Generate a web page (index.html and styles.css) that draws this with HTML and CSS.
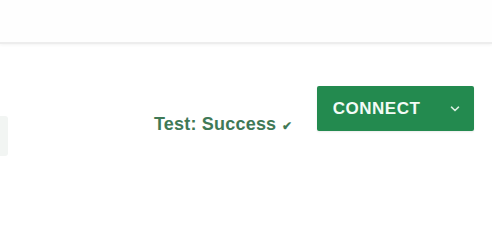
FILE: index.html
```html
<!DOCTYPE html>
<html>
<head>
<meta charset="utf-8">
<link rel="stylesheet" href="styles.css">
</head>
<body>
<div class="topbar"></div>
<div class="content">
  <div class="side-tab"></div>
  <div class="actions">
    <span class="status">Test: Success <span class="check">&#10004;</span></span>
    <button class="connect">
      <span class="label">CONNECT</span>
      <svg class="chev" width="10" height="6" viewBox="0 0 10 6"><path d="M1.5 1.2 L5 4.5 L8.5 1.2" fill="none" stroke="#d8eee0" stroke-width="1.6" stroke-linecap="round"/></svg>
    </button>
  </div>
</div>
</body>
</html>
```

FILE: styles.css
```css
html, body {
  margin: 0;
  padding: 0;
  background: #ffffff;
  font-family: "Liberation Sans", Arial, sans-serif;
}
.topbar {
  height: 42px;
  background: #fefefe;
  border-bottom: 2px solid #ededed;
  box-shadow: 0 1px 3px rgba(0,0,0,0.05);
}
.content {
  position: relative;
  display: flex;
  height: 187px;
}
.side-tab {
  position: absolute;
  left: 0;
  top: 72px;
  width: 8px;
  height: 40px;
  background: #f2f5f3;
  border-radius: 0 3px 3px 0;
}
.actions {
  display: flex;
  align-items: flex-start;
  margin-left: 154px;
  padding-top: 42px;
}
.status {
  margin-top: 28px;
  font-size: 18px;
  font-weight: bold;
  color: #3f7956;
  letter-spacing: 0.2px;
}
.check {
  font-size: 12px;
  margin-left: 0;
}
.connect {
  margin-left: 25px;
  width: 157px;
  height: 45px;
  background: #238a4f;
  border: none;
  border-radius: 2px;
  display: flex;
  align-items: center;
  padding: 0 0 0 16px;
  cursor: pointer;
  box-shadow: 0 1px 2px rgba(0,0,0,0.08);
}
.label {
  color: #f3fbf6;
  font-family: "Liberation Sans", Arial, sans-serif;
  font-weight: bold;
  font-size: 17px;
  letter-spacing: 0.5px;
}
.chev {
  margin-left: 30px;
}
```
